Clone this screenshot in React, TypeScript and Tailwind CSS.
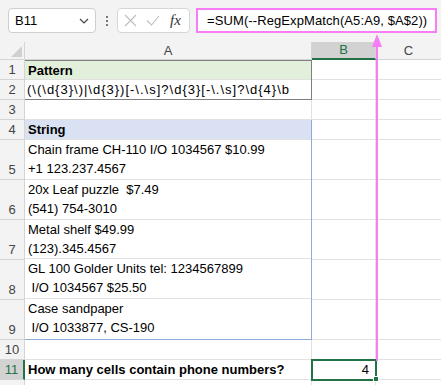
import React from 'react';

const GRID = 'border-[#e1e1e1]';
const HEAD = 'bg-[#f3f3f3] border-[#d4d4d4] text-[#444]';

const strings: string[][] = [
  ['Chain frame CH-110 I/O 1034567 $10.99', '+1 123.237.4567'],
  ['20x Leaf puzzle  $7.49', '(541) 754-3010'],
  ['Metal shelf $49.99', '(123).345.4567'],
  ['GL 100 Golder Units tel: 1234567899', ' I/O 1034567 $25.50'],
  ['Case sandpaper', ' I/O 1033877, CS-190'],
];

const RowHead = ({ n, tall, selected }: { n?: number; tall?: boolean; selected?: boolean }) => (
  <div
    className={`border-b ${selected ? 'bg-[#d2d2d2] border-r-2 border-r-[#217346] border-b-[#d4d4d4] text-[#217346]' : `${HEAD} border-r`} flex justify-center ${tall ? 'items-end' : 'items-center'} leading-[19px] text-[13px]`}
  >
    {n}
  </div>
);

const Blank = () => <div className={`border-r border-b ${GRID}`} />;

export default function App() {
  return (
    <div className="relative w-[441px] h-[385px] overflow-hidden bg-white font-['Liberation_Sans',Arial,sans-serif] text-[13px] text-black">
      {/* formula bar */}
      <div className="flex items-center h-[42px] bg-[#f3f3f3] pb-[1px]">
        <div className="ml-[8px] w-[88px] h-[25px] bg-white border border-[#cfcfcf] rounded-[4px] flex items-center pl-[6px] pr-[6px] justify-between">
          <span className="text-[13px]">B11</span>
          <svg width="10" height="6" viewBox="0 0 10 6">
            <path d="M1 1l4 4 4-4" fill="none" stroke="#444" strokeWidth="1.2" />
          </svg>
        </div>
        <div className="w-[21px] flex flex-col items-center gap-[2px]">
          <span className="w-[2px] h-[2px] bg-[#777]" />
          <span className="w-[2px] h-[2px] bg-[#777]" />
          <span className="w-[2px] h-[2px] bg-[#777]" />
        </div>
        <div className="w-[73px] h-[25px] bg-white border border-[#d6d6d6] rounded-[4px] flex items-center pl-[6px] gap-[9px]">
          <svg width="13" height="13" viewBox="0 0 13 13">
            <path d="M1 1l11 11M12 1L1 12" stroke="#bdbdbd" strokeWidth="1.1" />
          </svg>
          <svg width="14" height="11" viewBox="0 0 14 11">
            <path d="M1 5.5l4.5 4.5L13 1" fill="none" stroke="#bdbdbd" strokeWidth="1.1" />
          </svg>
          <span className="font-['Liberation_Serif',serif] italic text-[15px] text-[#333] ml-[1px]">fx</span>
        </div>
        <div className="ml-[6px] w-[241px] h-[25px] border-2 border-[#f67df5] bg-white flex items-center pl-[9px] text-[13px] tracking-[0.1px]">
          =SUM(--RegExpMatch(A5:A9, $A$2))
        </div>
      </div>

      {/* sheet */}
      <div className="grid grid-cols-[25px_287px_64px_1fr] grid-rows-[18px_20px_20px_20px_20px_40px_40px_40px_40px_40px_20px_20px_20px]">
        {/* column headers */}
        <div className={`${HEAD} border-r border-b relative`}>
          <svg className="absolute right-[2px] bottom-[2px]" width="11" height="11" viewBox="0 0 11 11">
            <path d="M11 0V11H0Z" fill="#d0d0d0" />
          </svg>
        </div>
        <div className={`${HEAD} border-r border-b flex items-center justify-center`}>A</div>
        <div className="bg-[#d2d2d2] border-r border-[#d4d4d4] border-b-2 border-b-[#217346] flex items-center justify-center text-[#217346]">B</div>
        <div className={`${HEAD} border-b flex items-center justify-center`}>C</div>

        {/* row 1-2 */}
        <RowHead n={1} />
        <div className="row-span-2 border border-[#7f7f7f] border-l-0 flex flex-col">
          <div className={`h-[19px] bg-[#e2efda] border-b ${GRID} font-bold pl-[3px] leading-[19px]`}>Pattern</div>
          <div className="h-[19px] pl-[2px] leading-[19px] whitespace-nowrap tracking-[1px]">{'(\\(\\d{3}\\)|\\d{3})[-\\.\\s]?\\d{3}[-\\.\\s]?\\d{4}\\b'}</div>
        </div>
        <Blank />
        <div className={`border-b ${GRID}`} />
        <RowHead n={2} />
        <Blank />
        <div className={`border-b ${GRID}`} />

        {/* row 3 */}
        <RowHead n={3} />
        <div className={`border-r border-b ${GRID}`} />
        <Blank />
        <div className={`border-b ${GRID}`} />

        {/* rows 4-9 */}
        <RowHead n={4} />
        <div className="row-span-6 border border-t-0 border-l-0 border-[#8eaadb] flex flex-col">
          <div className={`h-[20px] bg-[#d9e1f2] border-b ${GRID} font-bold pl-[3px] leading-[19px]`}>String</div>
          {strings.map((s, i) => (
            <div key={i} className={`h-[40px] pl-[3px] leading-[19px] whitespace-pre ${i < strings.length - 1 ? `border-b ${GRID}` : ''}`}>
              <div>{s[0]}</div>
              <div>{s[1]}</div>
            </div>
          ))}
        </div>
        <Blank />
        <div className={`border-b ${GRID}`} />
        {[5, 6, 7, 8, 9].map((n) => (
          <React.Fragment key={n}>
            <RowHead n={n} tall />
            <Blank />
            <div className={`border-b ${GRID}`} />
          </React.Fragment>
        ))}

        {/* row 10 */}
        <RowHead n={10} />
        <div className={`border-r border-b ${GRID}`} />
        <Blank />
        <div className={`border-b ${GRID}`} />

        {/* row 11 */}
        <RowHead n={11} selected />
        <div className={`border-r border-b ${GRID} font-bold pl-[3px] leading-[19px] whitespace-nowrap`}>How many cells contain phone numbers?</div>
        <div className={`relative border-r border-b ${GRID} text-right pr-[6px] leading-[19px]`}>
          4
          <div className="absolute -left-[1px] -top-[1px] w-[66px] h-[22px] border-2 border-[#217346]" />
          <div className="absolute -right-[4px] -bottom-[3px] w-[6px] h-[6px] bg-[#217346] border border-white" />
        </div>
        <div className={`border-b ${GRID}`} />

        {/* row 12, mostly below the fold */}
        <RowHead />
        <div className={`border-r border-b ${GRID}`} />
        <Blank />
        <div className={`border-b ${GRID}`} />
      </div>

      {/* pink arrow */}
      <svg className="absolute left-[371px] top-[34px]" width="12" height="327" viewBox="0 0 12 327">
        <path d="M6 10V327" stroke="#f67df5" strokeWidth="2" />
        <path d="M6 0L11 13H1Z" fill="#f67df5" />
      </svg>
    </div>
  );
}
